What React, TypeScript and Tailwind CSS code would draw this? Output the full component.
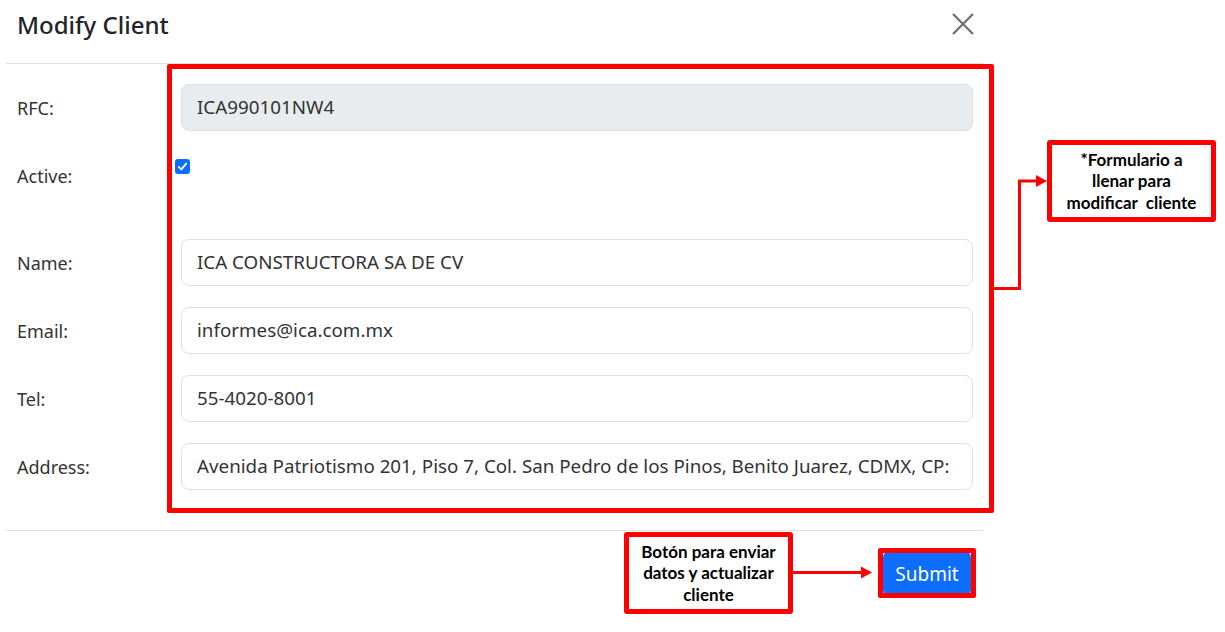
import React from "react";

const rows = [
  { label: "Name:", value: "ICA CONSTRUCTORA SA DE CV" },
  { label: "Email:", value: "informes@ica.com.mx" },
  { label: "Tel:", value: "55-4020-8001" },
  {
    label: "Address:",
    value:
      "Avenida Patriotismo 201, Piso 7, Col. San Pedro de los Pinos, Benito Juarez, CDMX, CP:",
  },
];

export default function App() {
  return (
    <div className="relative w-[1225px] h-[632px] bg-white overflow-hidden font-['Noto_Sans',sans-serif] text-[#212529]">
      {/* Modal */}
      <div className="ml-[6px] w-[977px]">
        <div className="h-[64px] flex items-center justify-between pl-[11px] pr-[9px] border-b border-[#dee2e6]">
          <div className="text-[24px] font-medium leading-none -mt-[14px]">Modify Client</div>
          <svg width="22" height="22" viewBox="0 0 22 22" className="-mt-[16px]">
            <path d="M1 1 L21 21 M21 1 L1 21" stroke="#6e6e6e" strokeWidth="2.2" />
          </svg>
        </div>

        <div className="pt-[20px] pl-[11px] pr-[10px] pb-[40px]">
          <div className="flex items-center mb-[21px]">
            <div className="w-[164px] text-[18px] text-[#333] pt-[2px]">RFC:</div>
            <div className="flex-1 h-[47px] rounded-[8px] border border-[#dee2e6] bg-[#e9ecef] flex items-center px-[15px] text-[18.8px] text-[#333]">
              ICA990101NW4
            </div>
          </div>

          <div className="flex items-start h-[66px] mb-[21px]">
            <div className="w-[158px] text-[18px] text-[#333] pt-[11px]">Active:</div>
            <div className="mt-[7px] w-[15px] h-[15px] rounded-[3px] bg-[#0d6efd] flex items-center justify-center">
              <svg width="11" height="11" viewBox="0 0 12 12">
                <path d="M2 6.5 L4.8 9.2 L10 2.8" stroke="white" strokeWidth="2" fill="none" strokeLinecap="round" strokeLinejoin="round" />
              </svg>
            </div>
          </div>

          {rows.map((r, i) => (
            <div key={r.label} className={`flex items-center ${i < rows.length - 1 ? "mb-[21px]" : ""}`}>
              <div className="w-[164px] text-[18px] text-[#333] pt-[2px]">{r.label}</div>
              <div className="flex-1 h-[47px] rounded-[8px] border border-[#dee2e6] bg-white flex items-center px-[15px] text-[18.8px] text-[#333] overflow-hidden whitespace-nowrap">
                <span className="block">{r.value}</span>
              </div>
            </div>
          ))}
        </div>

        <div className="border-t border-[#dee2e6] flex justify-end pt-[19px] pr-[12px]">
          <button className="w-[88px] h-[48px] rounded-[8px] bg-[#0d6efd] text-white text-[19px]">Submit</button>
        </div>
      </div>

      {/* Annotations */}
      <div className="absolute left-[167px] top-[64px] w-[827px] h-[449px] border-[5px] border-[#ff0000] rounded-[2px]" />

      <div className="absolute left-[1047px] top-[140px] w-[169px] h-[82px] border-[5px] border-[#ff0000] rounded-[3px] flex items-center justify-center text-center font-['Lato',sans-serif] font-bold text-[17px] leading-[21.5px] text-black">
        <div>
          *Formulario a
          <br />
          llenar para
          <br />
          modificar&nbsp; cliente
        </div>
      </div>

      <div className="absolute left-[624px] top-[532px] w-[169px] h-[82px] border-[5px] border-[#ff0000] rounded-[3px] flex items-center justify-center text-center font-['Lato',sans-serif] font-bold text-[17px] leading-[21.5px] text-black">
        <div>
          Botón para enviar
          <br />
          datos y actualizar
          <br />
          cliente
        </div>
      </div>

      <div className="absolute left-[878px] top-[548px] w-[98px] h-[50px] border-[5px] border-[#ff0000] rounded-[2px]" />

      <svg className="absolute left-0 top-0 pointer-events-none" width="1225" height="632">
        <polyline points="994,288.5 1019.5,288.5 1019.5,181 1038,181" fill="none" stroke="#ff0000" strokeWidth="3" />
        <polygon points="1036,175 1047,181 1036,187" fill="#ff0000" />
        <line x1="793" y1="572.5" x2="863" y2="572.5" stroke="#ff0000" strokeWidth="3" />
        <polygon points="861,566.5 872,572.5 861,578.5" fill="#ff0000" />
      </svg>
    </div>
  );
}
